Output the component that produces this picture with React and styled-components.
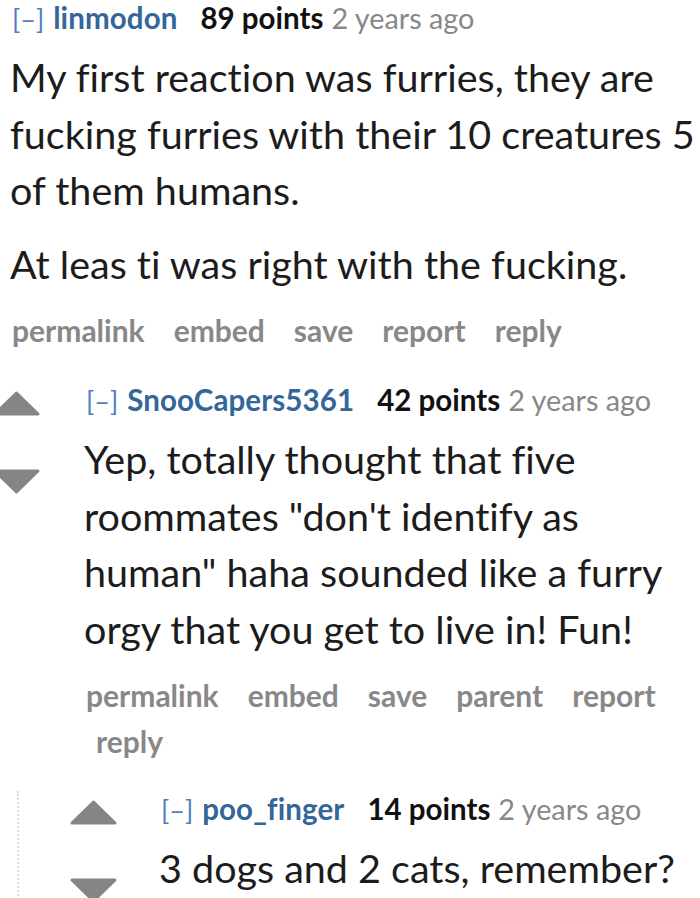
import styled, { createGlobalStyle } from "styled-components";

const GlobalStyle = createGlobalStyle`
  body {
    margin: 0;
    background: #fff;
    font-family: Lato, "Noto Sans", sans-serif;
    font-variant-ligatures: none;
    overflow: hidden;
  }
`;

const Page = styled.div`
  width: 700px;
  height: 898px;
  overflow: hidden;
  box-sizing: border-box;
`;

const CommentRow = styled.div`
  display: flex;
  align-items: flex-start;
  margin-top: ${(p) => p.$top || 0}px;
`;

const VoteCol = styled.div`
  flex: 0 0 ${(p) => p.$width}px;
  margin-left: ${(p) => p.$shift || 0}px;
  display: flex;
  flex-direction: column;
  gap: 53px;
  padding-top: 9px;
`;

const Arrow = styled.svg`
  display: block;
  width: 47px;
  height: 25px;
`;

const Entry = styled.div`
  flex: 1;
  min-width: 0;
  padding-left: ${(p) => p.$pad || 0}px;
`;

const Tagline = styled.div`
  display: flex;
  align-items: baseline;
  font-size: 29.5px;
  line-height: 36px;
  white-space: nowrap;
  padding-left: ${(p) => p.$indent || 0}px;
`;

const Expand = styled.span`
  color: #4f7fbf;
  font-weight: 400;
  font-size: 27px;
  margin-right: 9px;
`;

const Author = styled.span`
  color: #336699;
  font-weight: 700;
  letter-spacing: 0.1px;
  margin-right: 23px;
`;

const Score = styled.span`
  color: #111;
  font-weight: 700;
  margin-right: 8px;
`;

const Time = styled.span`
  color: #888;
  font-size: 28.8px;
`;

const Body = styled.div`
  color: #1c1c1c;
  font-size: 39.5px;
  line-height: 56.5px;
  margin-top: 12px;

  p {
    margin: 0;
  }
  p + p {
    margin-top: 17px;
  }
`;

const Actions = styled.ul`
  list-style: none;
  margin: 15px 0 0;
  padding: 0 0 0 2px;
  display: flex;
  flex-wrap: wrap;
  font-size: 30px;
  line-height: 46px;
`;

const ActionLink = styled.li`
  color: #888;
  font-weight: 700;
  margin-right: 19px;
  padding-left: 10px;
  &:first-child {
    padding-left: 0;
  }
`;

const Children = styled.div`
  margin-left: ${(p) => p.$offset || 0}px;
  margin-top: ${(p) => p.$top || 0}px;
  border-left: ${(p) => (p.$border ? "2px dotted #d8d8f6" : "none")};
  padding-left: ${(p) => p.$pad || 0}px;
`;

const UpArrow = () => (
  <Arrow viewBox="0 0 47 25">
    <path d="M23.5 2 L45 23 L2 23 Z" fill="#858585" stroke="#858585" strokeWidth="3" strokeLinejoin="round" />
  </Arrow>
);

const DownArrow = () => (
  <Arrow viewBox="0 0 47 25">
    <path d="M2 2 L45 2 L23.5 23 Z" fill="#858585" stroke="#858585" strokeWidth="3" strokeLinejoin="round" />
  </Arrow>
);

function Comment({ comment, top, voteWidth, voteShift, pad, indent, children }) {
  return (
    <>
      <CommentRow $top={top}>
        {voteWidth ? (
          <VoteCol $width={voteWidth} $shift={voteShift}>
            <UpArrow />
            <DownArrow />
          </VoteCol>
        ) : null}
        <Entry $pad={pad}>
          <Tagline $indent={indent}>
            <Expand>[–]</Expand>
            <Author>{comment.author}</Author>
            <Score>{comment.points} points</Score>
            <Time>2 years ago</Time>
          </Tagline>
          <Body>
            {comment.body.map((para, i) => (
              <p key={i}>{para}</p>
            ))}
          </Body>
          {comment.actions && (
            <Actions>
              {comment.actions.map((a) => (
                <ActionLink key={a}>{a}</ActionLink>
              ))}
            </Actions>
          )}
        </Entry>
      </CommentRow>
      {children}
    </>
  );
}

const thread = {
  top: {
    author: "linmodon",
    points: 89,
    body: [
      "My first reaction was furries, they are fucking furries with their 10 creatures 5 of them humans.",
      "At leas ti was right with the fucking.",
    ],
    actions: ["permalink", "embed", "save", "report", "reply"],
  },
  child: {
    author: "SnooCapers5361",
    points: 42,
    body: [
      'Yep, totally thought that five roommates "don\'t identify as human" haha sounded like a furry orgy that you get to live in! Fun!',
    ],
    actions: ["permalink", "embed", "save", "parent", "report", "reply"],
  },
  grandchild: {
    author: "poo_finger",
    points: 14,
    body: ["3 dogs and 2 cats, remember?"],
  },
};

export default function App() {
  return (
    <Page>
      <GlobalStyle />
      <Comment comment={thread.top} pad={10} indent={2}>
        <Children>
          <Comment comment={thread.child} top={29} voteWidth={91} voteShift={-7} indent={2}>
            <Children $offset={17} $top={27} $border $pad={51}>
              <Comment comment={thread.grandchild} top={7} voteWidth={89} indent={2} />
            </Children>
          </Comment>
        </Children>
      </Comment>
    </Page>
  );
}
